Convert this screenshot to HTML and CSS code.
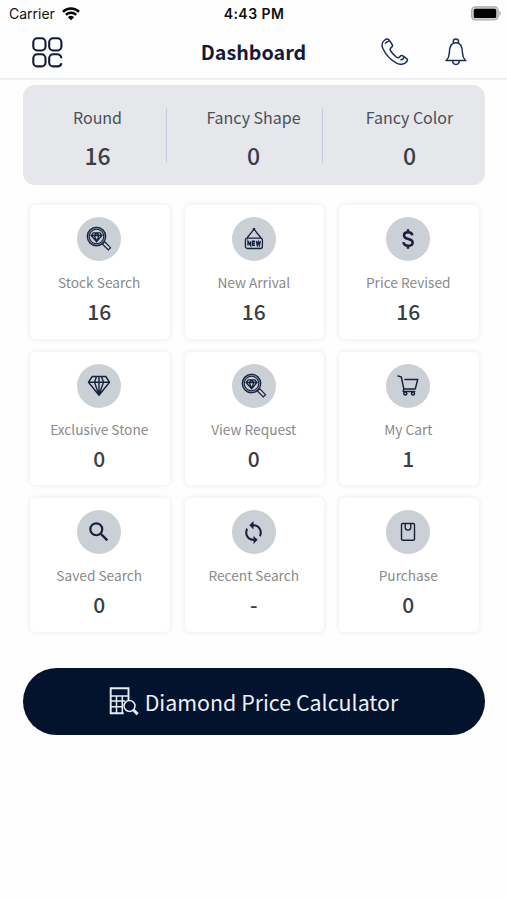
FILE: index.html
```html
<!DOCTYPE html>
<html lang="en">
<head>
<meta charset="utf-8">
<title>Dashboard</title>
<link rel="stylesheet" href="styles.css">
</head>
<body>
<svg class="defs" aria-hidden="true">
  <symbol id="gem-search" viewBox="0 0 26 26">
    <g fill="none" stroke="currentColor">
      <circle cx="10.5" cy="10.5" r="8.3" stroke-width="3.2" opacity=".45"/>
      <circle cx="10.5" cy="10.5" r="9.2" stroke-width="1.1"/>
      <circle cx="10.5" cy="10.5" r="7.2" stroke-width="1"/>
      <path d="M17 17l2-1 5.5 5.700-2.200 2.200-5.700-5.600z" stroke-width="1.2"/>
      <path d="M7.3 6.800h6.600l2.100 2.700-5.400 6.200-5.500-6.200zM5.100 9.500H16M8.300 9.500l2.300 6 2.300-6-2.300-2.500z" stroke-width="1.300"/>
    </g>
  </symbol>
</svg>
<header class="status">
  <div class="carrier"><span>Carrier</span>
    <svg width="18" height="14" viewBox="0 0 18 14" fill="none" stroke="#000" stroke-width="2.4"><path d="M1 4.8a11.4 11.4 0 0 1 16 0M3.8 7.9a7.5 7.5 0 0 1 10.4 0"/><path d="M5.9 10.2a4.5 4.5 0 0 1 6.2 0L9 13.3z" fill="#000" stroke="none"/></svg>
  </div>
  <time>4:43 PM</time>
  <svg class="battery" width="31" height="15" viewBox="0 0 31 15"><rect x=".6" y=".8" width="26.6" height="13.2" rx="3.8" fill="#ccc" stroke="#aaa" stroke-width="1.2"/><rect x="2.8" y="2.8" width="22.4" height="9.2" rx="1.6"/><path d="M28.4 4.8q3 2.6 0 5.2z" fill="#aaa"/></svg>
</header>
<nav class="bar">
  <svg class="menu" width="31" height="31" viewBox="0 0 31 31" fill="none" stroke="#141b38" stroke-width="2.1"><rect x="1.3" y="1.3" width="12.2" height="12.2" rx="4"/><rect x="17.2" y="1.3" width="12.2" height="12.2" rx="4"/><rect x="1.3" y="17.2" width="12.2" height="12.2" rx="4"/><path d="M29.4 21.3a4 4 0 0 0-4-4.1h-4.2a4 4 0 0 0-4 4v4.2a4 4 0 0 0 4 4h4.2a4 4 0 0 0 4-3.2"/></svg>
  <h1>Dashboard</h1>
  <div class="actions">
    <svg width="28" height="28" viewBox="0 0 28 28" fill="none" stroke="#1c2d56" stroke-width="1.5" stroke-linejoin="round" stroke-linecap="round"><path d="M3.8 2C1.2 4 .3 7.1 2 10.8c3 6.5 7.2 10.9 13.6 14.3 4.2 2.1 7.6 1.7 10.2-1.6 1-1.1.9-2-.2-2.9l-3.7-2.7c-1.1-.8-2-.5-2.9.6-1.4 1.8-2.5 1.5-4.3 0-2.1-1.7-3.7-3.5-5-5.5-1-1.7-.8-2.700.7-3.700 1.200-.8 1.400-1.700.7-2.800L8.300 2.200C7.200.7 5.600.6 3.800 2z"/><path d="M4.500 5.200c.8-1.300 2-2 3.700-2.300M20 21.800c1.500-.2 2.500-1.100 3-2.600"/></svg>
    <svg width="22" height="28" viewBox="0 0 22 28" fill="none" stroke="#1c2d56" stroke-width="1.5" stroke-linejoin="round" stroke-linecap="round"><path d="M8.300 5V3.500a2.600 2.600 0 0 1 5.200 0V5M1.500 22.600h18.800c-2-2.200-2.700-4.400-2.900-8.100-.1-6.400-2.200-9.700-6.500-9.700s-6.400 3.300-6.500 9.700c-.2 3.700-.9 5.900-2.900 8.100zM7.600 22.800c.2 4.800 6.500 4.800 6.700 0M1 22.600h19.800"/></svg>
  </div>
</nav>
<main>
  <section class="summary">
    <div><span>Round</span><b>16</b></div>
    <hr>
    <div><span>Fancy Shape</span><b>0</b></div>
    <hr>
    <div><span>Fancy Color</span><b>0</b></div>
  </section>
  <section class="cards">
    <article><i><svg width="26" height="26"><use href="#gem-search"/></svg></i><span>Stock Search</span><b>16</b></article>
    <article><i><svg width="20" height="24" viewBox="0 0 20 24" fill="none" stroke="currentColor" stroke-width="1.3"><rect x="1.4" y="11.2" width="17" height="10.3" rx="2"/><path d="M3 11l7-8.8 7 8.8"/><circle cx="10" cy="2.2" r=".7"/><path d="M4 18.500v-4.300l2.600 4.300v-4.300M11 14.300H8.600v4H11M8.600 16.300h2.200M12.300 14l1 4.300 1-3.300 1 3.300 1-4.300" stroke-width="1.4"/></svg></i><span>New Arrival</span><b>16</b></article>
    <article><i><svg width="26" height="26" viewBox="0 0 24 24" fill="none" stroke="currentColor" stroke-width="2.3"><path d="M16 8.700c-.3-1.900-1.700-2.900-4-2.900-2.200 0-3.700 1.100-3.700 2.900 0 4.500 8 2.100 8 6.500 0 1.900-1.700 3-4.100 3-2.600 0-4.200-1.200-4.400-3.300M12 3v3M12 18v3"/></svg></i><span>Price Revised</span><b>16</b></article>
    <article><i><svg width="24" height="22" viewBox="0 0 24 22" fill="none" stroke="currentColor" stroke-width="1.4" stroke-linejoin="round"><path d="M5.200 1.500h13.600l3.700 5.700L12 20.300 1.500 7.200zM1.500 7.200h21M9.500 1.500l-2 5.700L12 20l4.500-12.800-2-5.700M12 1.500V20"/></svg></i><span>Exclusive Stone</span><b>0</b></article>
    <article><i><svg width="26" height="26"><use href="#gem-search"/></svg></i><span>View Request</span><b>0</b></article>
    <article><i><svg width="24" height="23" viewBox="0 0 24 23" fill="none" stroke="currentColor" stroke-width="1.5" stroke-linecap="round" stroke-linejoin="round"><path d="M2 2l3.300.9 2.500 12h11.500l2.400-9.500H9M7.800 15l-.6 2.400h11.500"/><circle cx="9.300" cy="19.500" r="1.500"/><circle cx="17" cy="19.500" r="1.500"/></svg></i><span>My Cart</span><b>1</b></article>
    <article><i><svg width="26" height="26" viewBox="0 0 24 24" fill="none" stroke="currentColor" stroke-width="2"><circle cx="9.500" cy="9.500" r="5.500"/><path d="M13.700 13.700l6 6" stroke-width="2.200"/></svg></i><span>Saved Search</span><b>0</b></article>
    <article><i><svg width="25" height="25" viewBox="0 0 24 24" fill="currentColor"><path d="M12 4V1L8 5l4 4V6c3.310 0 6 2.690 6 6 0 1.010-.25 1.970-.7 2.800l1.460 1.460A7.930 7.930 0 0 0 20 12c0-4.420-3.580-8-8-8zm0 14c-3.310 0-6-2.690-6-6 0-1.010.25-1.970.7-2.800L5.240 7.740A7.930 7.930 0 0 0 4 12c0 4.420 3.580 8 8 8v3l4-4-4-4z"/></svg></i><span>Recent Search</span><b>-</b></article>
    <article><i><svg width="16" height="20" viewBox="0 0 16 20" fill="none" stroke="currentColor" stroke-width="1.4"><rect x="1.5" y="1.5" width="13" height="16.7" rx="1.2"/><path d="M5.200 2v3.300a2.800 2.800 0 0 0 5.600 0V2"/></svg></i><span>Purchase</span><b>0</b></article>
  </section>
  <button class="calc">
    <svg width="30" height="29" viewBox="0 0 30 29" fill="none" stroke="#e4edf8"><path d="M19.500 14V1.300H1.700v24.900h13" stroke-width="1.9"/><path d="M2 8.900h17M2 14h14M2 19.800h12M7.500 9v17M13.300 9v17" stroke-width="1.5"/><circle cx="20.500" cy="19" r="5.5" stroke-width="1.5"/><path d="M24.600 23l4 4.300" stroke-width="3"/></svg>
    <span>Diamond Price Calculator</span>
  </button>
</main>
</body>
</html>
```
FILE: styles.css
```css
* { box-sizing: border-box; }
body {
  margin: 0;
  background: #fefefe;
  color: #3a3e46;
  font-family: "Noto Sans CJK SC", "Noto Sans", sans-serif;
}
svg { display: block; flex: none; }
.defs { display: none; }
.status {
  display: grid;
  grid-template-columns: 1fr auto 1fr;
  align-items: center;
  height: 27px;
  padding: 0 8px 0 9px;
  color: #111;
  font: 14px/20px Inter, sans-serif;
}
.carrier { display: flex; align-items: center; gap: 7px; }
.status time { font-weight: 600; letter-spacing: .45px; }
.battery { justify-self: end; margin-right: -3px; }
.bar {
  display: grid;
  grid-template-columns: 1fr auto 1fr;
  align-items: center;
  height: 53px;
  padding: 0 40px 1px;
  border-bottom: 2px solid #eeeff1;
}
.menu { margin-left: -8px; }
h1 {
  margin: 0;
  color: #141b38;
  font-size: 19.7px;
  line-height: 28px;
  font-weight: 700;
}
.actions { display: flex; justify-content: flex-end; align-items: center; gap: 36px; }
main { padding: 5px 22px 0 23px; }
.summary {
  display: grid;
  grid-template-columns: 137px 2px 154px 2px 154px;
  align-items: center;
  height: 100px;
  padding-left: 6px;
  border-radius: 12px;
  background: #e5e7eb;
}
.summary hr { width: 1px; height: 55px; margin: 0; border: 0; background: #c5cddd; }
.summary div {
  display: flex;
  flex-direction: column;
  align-items: center;
  height: 56px;
}
.summary div:not(:first-child) { padding-left: 17px; }
.summary span { font-size: 16px; line-height: 20px; color: #4b5058; }
b { font-weight: 500; }
.summary b { margin-top: 14px; font-size: 23px; line-height: 28px; }
.cards {
  display: grid;
  grid-template-columns: repeat(3, 139.5px);
  grid-auto-rows: 133.5px;
  gap: 13.2px 15px;
  padding: 20px 7px 0;
}
article {
  display: flex;
  flex-direction: column;
  align-items: center;
  padding: 12px 1px 0 0;
  border-radius: 5px;
  background: #fff;
  box-shadow: 0 0 4px 1px #efefef;
}
article i {
  display: grid;
  place-items: center;
  width: 44px;
  height: 44px;
  border-radius: 50%;
  background: #cbd0d6;
  color: #17223d;
}
article span { margin-top: 11px; font-size: 13.7px; line-height: 20px; color: #8a8a8a; }
article b { margin-top: 6px; font-size: 21px; line-height: 26px; }
.calc {
  display: flex;
  align-items: center;
  justify-content: center;
  gap: 6px;
  width: 462px;
  height: 67px;
  margin: 36px 0 0;
  padding: 1px 1px 0 0;
  border: 0;
  border-radius: 34px;
  background: #04132d;
  color: #e9f0f8;
  font: 21.4px/32px "Noto Sans CJK SC", sans-serif;
}
```
